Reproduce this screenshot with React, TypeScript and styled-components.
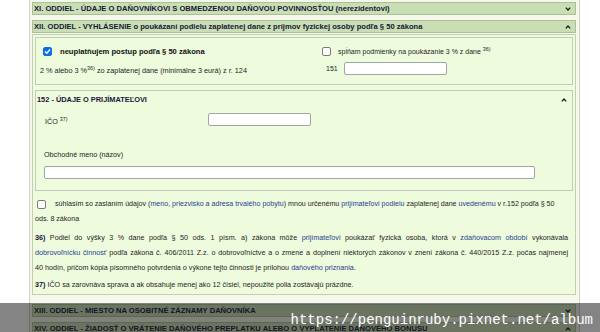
import React from "react";
import styled, { createGlobalStyle } from "styled-components";

const GlobalStyle = createGlobalStyle`
  html, body {
    margin: 0;
    padding: 0;
    background: #ffffff;
  }
  body {
    font-family: "Liberation Sans", Arial, sans-serif;
    color: #1e1e1e;
  }
`;

const Page = styled.div`
  position: relative;
  width: 600px;
  height: 332px;
  overflow: hidden;
`;

const Sheet = styled.div`
  box-sizing: border-box;
  margin-left: 29px;
  width: 551px;
  min-height: 340px;
  padding: 2px 3px 0 2px;
  border-left: 1px solid #cfd2c4;
  border-right: 1px solid #cfd2c4;
  background: #f5f8ea;
`;

const SectionBar = styled.div<{ $gap?: number }>`
  box-sizing: border-box;
  height: 13px;
  margin-bottom: ${(p) => p.$gap ?? 5}px;
  padding: 0 4px 0 1px;
  display: flex;
  align-items: center;
  justify-content: space-between;
  border: 1px solid #a9c293;
  background: #c9deb4;
  font-weight: bold;
  font-size: 7.6px;
  color: #17173a;
  white-space: nowrap;
  overflow: hidden;
`;

const Panel = styled.div`
  box-sizing: border-box;
  margin: -4px 0 9px;
  padding: 2px;
  border: 1px solid #c3cfb2;
  background: #eefbdc;
`;

const Fieldset = styled.div<{ $height: number; $gap?: number }>`
  box-sizing: border-box;
  height: ${(p) => p.$height}px;
  margin-top: ${(p) => p.$gap ?? 0}px;
  border: 1px solid #c6cab8;
  background: #eefbdc;
`;

const ChoiceGrid = styled.div`
  display: grid;
  grid-template-columns: 282px 1fr;
  grid-template-rows: 10px 13px;
  row-gap: 6px;
  padding: 8px 0 0 4px;
  align-items: center;
`;

const Choice = styled.label<{ $indent?: number; $gap?: number }>`
  display: flex;
  align-items: center;
  gap: ${(p) => p.$gap ?? 7}px;
  padding-left: ${(p) => p.$indent ?? 0}px;
  font-size: 7px;
  white-space: nowrap;
`;

const Strong = styled.span`
  font-weight: bold;
  font-size: 7.6px;
  color: #111;
`;

const Box = styled.span<{ $checked?: boolean }>`
  box-sizing: border-box;
  flex: none;
  width: 9px;
  height: 9px;
  border-radius: 2px;
  display: inline-flex;
  align-items: center;
  justify-content: center;
  border: 1px solid ${(p) => (p.$checked ? "#0b6fe8" : "#7a7a7a")};
  background: ${(p) => (p.$checked ? "#0b6fe8" : "#ffffff")};
`;

const Sup = styled.sup`
  font-size: 5.4px;
  vertical-align: 3px;
  line-height: 0;
`;

const Note = styled.div<{ $drop?: number }>`
  font-size: 7.3px;
  white-space: nowrap;
  padding-top: ${(p) => p.$drop ?? 0}px;
`;

const Field = styled.div`
  display: flex;
  align-items: center;
  gap: 6px;
  padding-left: 4px;
  font-size: 7px;
`;

const Input = styled.div<{ $width: number }>`
  box-sizing: border-box;
  width: ${(p) => p.$width}px;
  height: 13px;
  border: 1px solid #a4a4a4;
  border-radius: 2px;
  background: #ffffff;
`;

const BoxTitle = styled.div`
  display: flex;
  justify-content: space-between;
  align-items: center;
  height: 9px;
  padding: 4px 5px 0 1px;
  font-weight: bold;
  font-size: 7.4px;
  color: #17173a;
`;

const FormRow = styled.div`
  display: flex;
  align-items: flex-end;
  margin-top: 9px;
  padding-left: 9px;
`;

const FieldLabel = styled.div<{ $width?: number }>`
  width: ${(p) => (p.$width ? `${p.$width}px` : "auto")};
  font-size: 7.2px;
  line-height: 9px;
  white-space: nowrap;
`;

const Stack = styled.div`
  padding-left: 8px;
`;

const StackLabel = styled.div`
  margin-top: 24px;
  font-size: 7.2px;
  line-height: 9px;
`;

const StackInput = styled(Input)`
  margin-top: 7px;
`;

const Consent = styled.div`
  margin-top: 5px;
  font-size: 7.1px;
`;

const ConsentLine = styled.div`
  display: flex;
  align-items: center;
  gap: 9px;
  height: 16px;
  padding-left: 2px;
  white-space: nowrap;
`;

const Plain = styled.div<{ $top?: number }>`
  line-height: 15px;
  margin-top: ${(p) => p.$top ?? 0}px;
  white-space: nowrap;
`;

const Footnotes = styled.div`
  margin-top: 3px;
  font-size: 7.2px;
  padding-right: 5px;
`;

const Justified = styled.div`
  line-height: 15px;
  text-align: justify;
  text-align-last: justify;
  white-space: nowrap;
`;

const Mark = styled.b`
  color: #14143a;
`;

const Term = styled.span`
  color: #243f93;
`;

const Watermark = styled.div`
  position: absolute;
  left: 0;
  right: 0;
  top: 303px;
  bottom: 0;
  background: rgba(20, 20, 20, 0.52);
  display: flex;
  justify-content: flex-end;
  align-items: flex-start;
  padding: 9px 7px 0 0;
  font-family: "Liberation Mono", "Courier New", monospace;
  font-size: 14px;
  line-height: 16px;
  color: #ffffff;
`;

const Chevron = ({ up }: { up?: boolean }) => (
  <svg width="6" height="4" viewBox="0 0 6 4">
    <path
      d={up ? "M0.8 3.4 L3 1 L5.2 3.4" : "M0.8 0.6 L3 3 L5.2 0.6"}
      fill="none"
      stroke="#1a1a1a"
      strokeWidth="1.3"
    />
  </svg>
);

const Check = () => (
  <svg width="7" height="7" viewBox="0 0 7 7">
    <path d="M1 3.6 L2.8 5.3 L6 1.5" fill="none" stroke="#fff" strokeWidth="1.4" />
  </svg>
);

export default function App() {
  return (
    <Page>
      <GlobalStyle />
      <Sheet>
        <SectionBar>
          <span>XI. ODDIEL - ÚDAJE O DAŇOVNÍKOVI S OBMEDZENOU DAŇOVOU POVINNOSŤOU (nerezidentovi)</span>
          <Chevron />
        </SectionBar>
        <SectionBar>
          <span>
            XII. ODDIEL - VYHLÁSENIE o poukázaní podielu zaplatenej dane z príjmov fyzickej osoby
            podľa § 50 zákona
          </span>
          <Chevron up />
        </SectionBar>

        <Panel>
          <Fieldset $height={48}>
            <ChoiceGrid>
              <Choice $indent={3} $gap={8}>
                <Box $checked>
                  <Check />
                </Box>
                <Strong>neuplatňujem postup podľa § 50 zákona</Strong>
              </Choice>
              <Choice $gap={7}>
                <Box />
                <span>
                  spĺňam podmienky na poukázanie 3 % z dane <Sup>36)</Sup>
                </span>
              </Choice>
              <Note $drop={4}>
                2 % alebo 3 %<Sup>36)</Sup> zo zaplatenej dane (minimálne 3 eurá) z r. 124
              </Note>
              <Field>
                <span>151</span>
                <Input $width={103} />
              </Field>
            </ChoiceGrid>
          </Fieldset>

          <Fieldset $height={101} $gap={5}>
            <BoxTitle>
              <span>152 - ÚDAJE O PRIJÍMATEĽOVI</span>
              <Chevron up />
            </BoxTitle>
            <FormRow>
              <FieldLabel $width={163}>
                IČO <Sup>37)</Sup>
              </FieldLabel>
              <Input $width={103} />
            </FormRow>
            <Stack>
              <StackLabel>Obchodné meno (názov)</StackLabel>
              <StackInput $width={491} />
            </Stack>
          </Fieldset>

          <Consent>
            <ConsentLine>
              <Box />
              <span>
                súhlasím so zaslaním údajov (<Term>meno, priezvisko a adresa trvalého pobytu</Term>) mnou
                určenému <Term>prijímateľovi podielu</Term> zaplatenej dane <Term>uvedenému</Term> v r.152
                podľa § 50
              </span>
            </ConsentLine>
            <Plain>ods. 8 zákona</Plain>
          </Consent>

          <Footnotes>
            <Justified>
              <Mark>36)</Mark> Podiel do výšky 3 % dane podľa § 50 ods. 1 písm. a) zákona môže{" "}
              <Term>prijímateľovi</Term> poukázať fyzická osoba, ktorá v <Term>zdaňovacom období</Term>{" "}
              vykonávala
            </Justified>
            <Justified>
              <Term>dobrovoľnícku činnosť</Term> podľa zákona č. 406/2011 Z.z. o dobrovoľníctve a o zmene a
              doplnení niektorých zákonov v znení zákona č. 440/2015 Z.z. počas najmenej
            </Justified>
            <Plain>
              40 hodín, pričom kópia písomného potvrdenia o výkone tejto činnosti je prílohou{" "}
              <Term>daňového priznania</Term>.
            </Plain>
            <Plain $top={2}>
              <Mark>37)</Mark> IČO sa zarovnáva sprava a ak obsahuje menej ako 12 čísiel, nepoužité polia
              zostávajú prázdne.
            </Plain>
          </Footnotes>
        </Panel>

        <SectionBar>
          <span>XIII. ODDIEL - MIESTO NA OSOBITNÉ ZÁZNAMY DAŇOVNÍKA</span>
          <Chevron />
        </SectionBar>
        <SectionBar>
          <span>XIV. ODDIEL - ŽIADOSŤ O VRÁTENIE DAŇOVÉHO PREPLATKU ALEBO O VYPLATENIE DAŇOVÉHO BONUSU</span>
          <Chevron up />
        </SectionBar>
      </Sheet>
      <Watermark>https://penguinruby.pixnet.net/album</Watermark>
    </Page>
  );
}
